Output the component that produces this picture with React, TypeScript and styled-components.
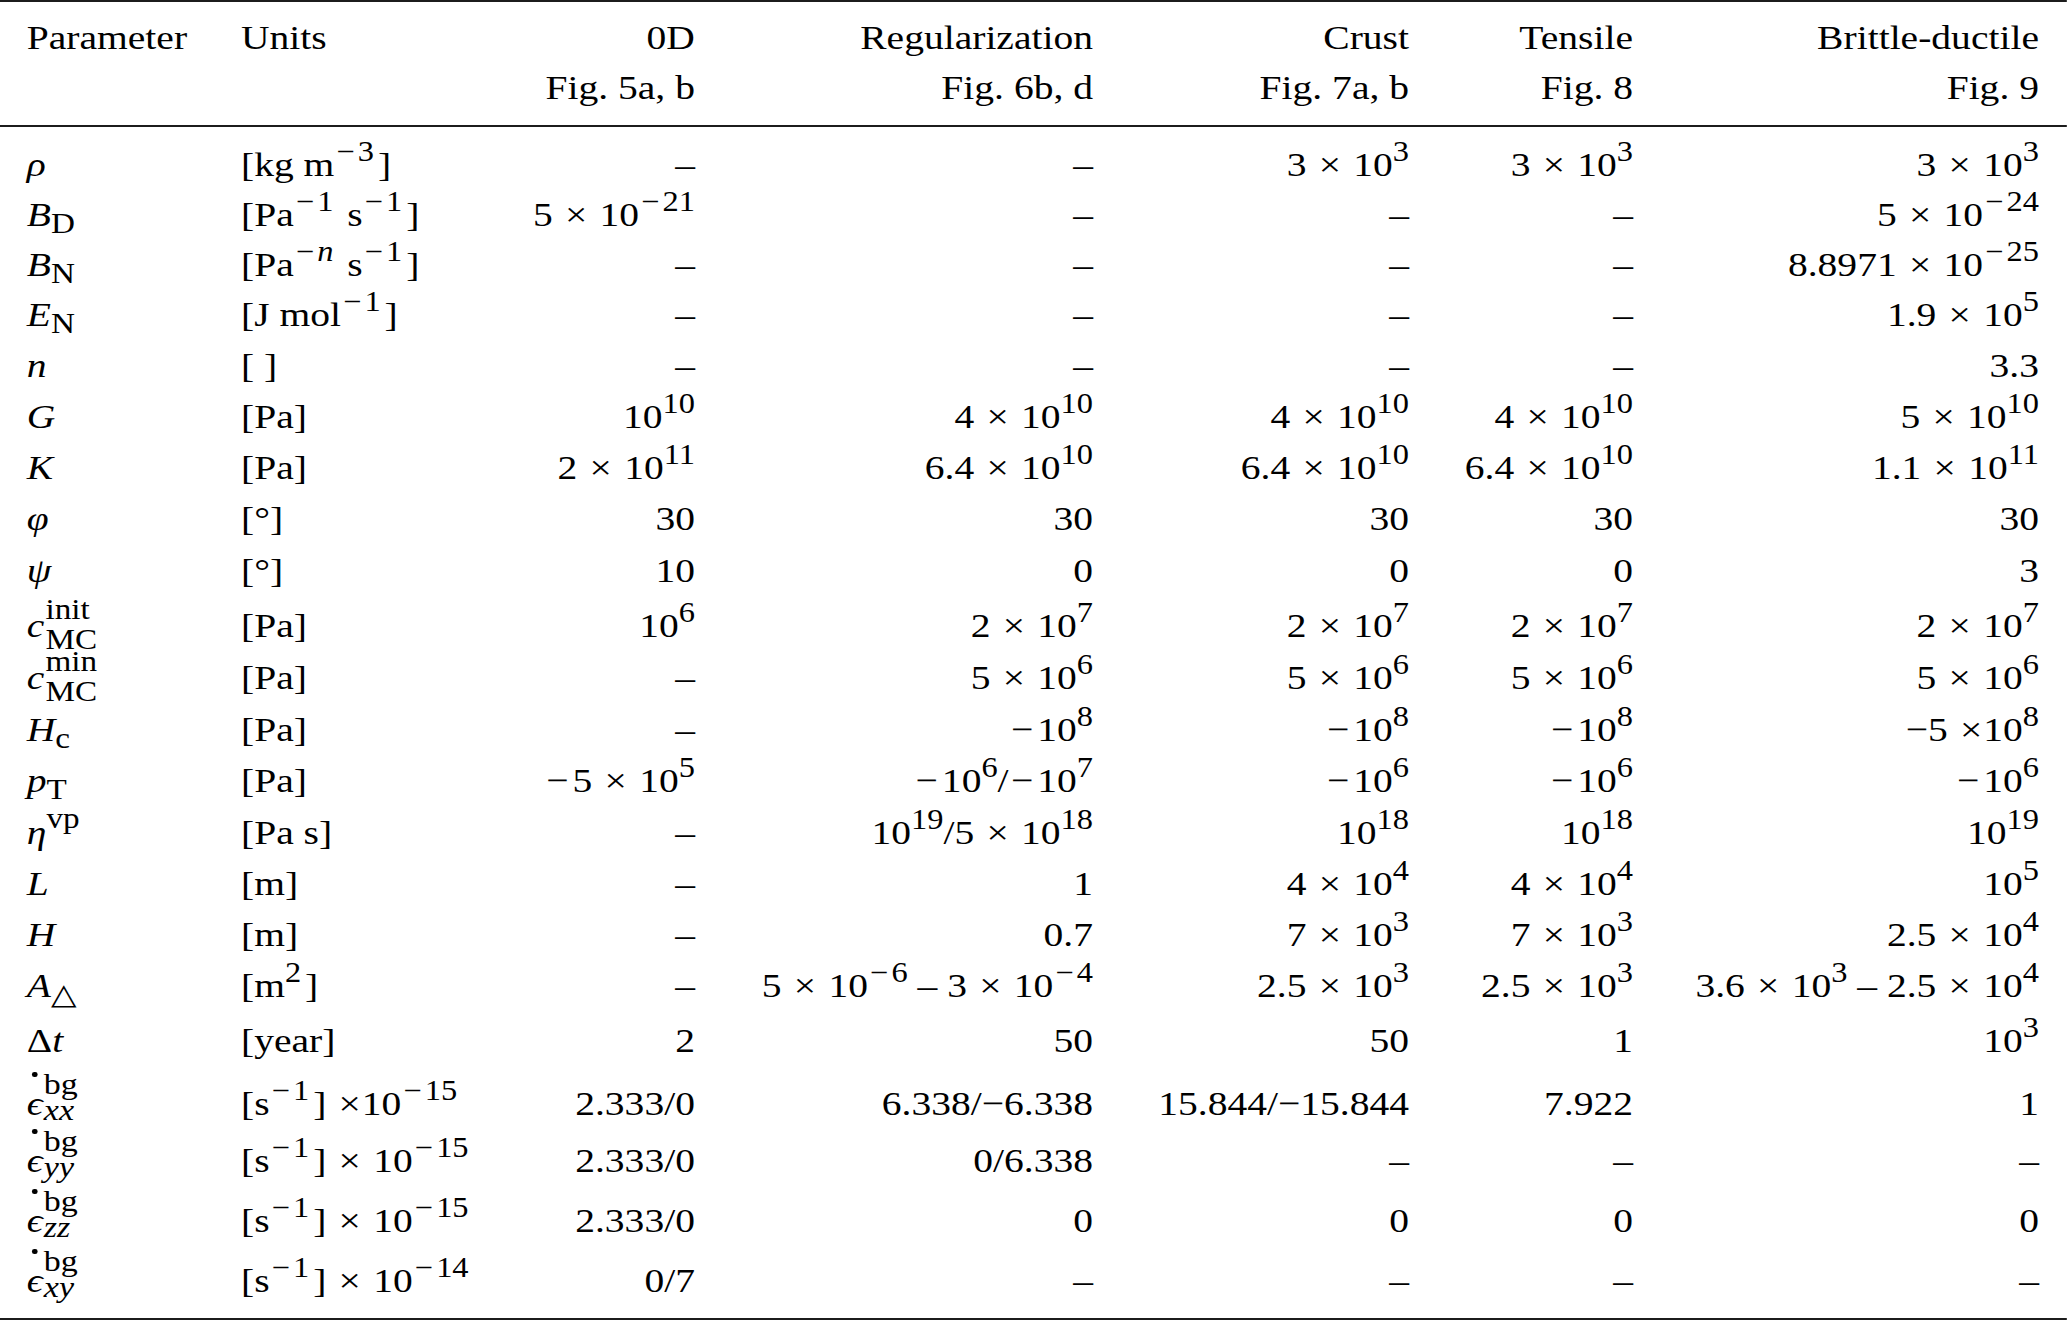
import React from 'react';
import styled, { createGlobalStyle } from 'styled-components';

const STRETCH = 1.14;
const PAGE_W = 2067;
const COLS = '187.9px 230px 168.2px 349.2px 277.2px 196.5px 356.1px';

const GlobalStyle = createGlobalStyle`
  html, body {
    margin: 0;
    padding: 0;
    background: #ffffff;
    overflow: hidden;
  }
  body {
    font-family: "Liberation Serif", "Times New Roman", "DejaVu Serif", serif;
    color: #000000;
  }
`;

const Page = styled.main`
  width: ${PAGE_W}px;
  height: 1321px;
  background: #ffffff;
`;

const Table = styled.section`
  width: ${PAGE_W / STRETCH}px;
  transform: scaleX(${STRETCH});
  transform-origin: 0 0;
  font-size: 34.7px;
  line-height: 50px;
  border-top: 2px solid #1c1c1c;
  border-bottom: 2px solid #1c1c1c;
`;

const Head = styled.header`
  display: grid;
  grid-template-columns: ${COLS};
  padding: 11.3px 24.6px 12.2px 23.5px;
  border-bottom: 2px solid #1c1c1c;
`;

const HeadCell = styled.div<{ $right?: boolean }>`
  text-align: ${(p) => (p.$right ? 'right' : 'left')};
  white-space: nowrap;
`;

const Body = styled.div`
  padding-top: 12.8px;
`;

const Row = styled.div<{ $h: number }>`
  display: grid;
  grid-template-columns: ${COLS};
  height: ${(p) => p.$h}px;
  padding: 0 24.6px 0 23.5px;
`;

const Cell = styled.div<{ $right?: boolean }>`
  text-align: ${(p) => (p.$right ? 'right' : 'left')};
  white-space: nowrap;
`;

const V = styled.i`
  font-style: italic;
`;

/* superscript on numbers and units */
const Sup = styled.sup<{ $space?: boolean }>`
  font-size: 0.82em;
  line-height: 0;
  vertical-align: 15px;
  padding-right: ${(p) => (p.$space ? '0.12em' : '0')};
`;

/* math operators: multiplication sign and minus with TeX-like side bearings */
const Op = styled.span<{ $tight?: boolean }>`
  padding: 0 ${(p) => (p.$tight ? '0.02em' : '0.06em')} 0 0.06em;
`;

const Minus = styled.span`
  padding: 0 0.1em 0 0.06em;
`;

const PSub = styled.sub`
  font-size: 0.84em;
  line-height: 0;
  vertical-align: -7px;
  font-style: normal;
`;

const PSup = styled.sup`
  font-size: 0.84em;
  line-height: 0;
  vertical-align: 16px;
`;

const Stack = styled.span<{ $drop: number; $gap: number; $size: number }>`
  display: inline-block;
  vertical-align: -${(p) => p.$drop}px;
  font-size: ${(p) => p.$size}em;
  line-height: ${(p) => p.$gap}px;
  margin: -40px 0 -40px 1px;
`;

const StackLine = styled.span<{ $italic?: boolean }>`
  display: block;
  font-style: ${(p) => (p.$italic ? 'italic' : 'normal')};
`;

const Eps = styled.i`
  position: relative;
  font-style: italic;
  &::after {
    content: '';
    position: absolute;
    left: 0.14em;
    top: -12px;
    width: 4.4px;
    height: 4.4px;
    border-radius: 50%;
    background: #000000;
  }
`;

const DASH = '–';

const M = () => <Minus>−</Minus>;
const X = ({ tight }: { tight?: boolean }) => (
  <Op $tight={tight}>{tight ? ' ×' : ' × '}</Op>
);

const pow = (exp: React.ReactNode) => (
  <>
    10<Sup>{exp}</Sup>
  </>
);

const sci = (mant: string | null, exp: React.ReactNode) =>
  mant ? (
    <>
      {mant}
      <X />
      {pow(exp)}
    </>
  ) : (
    pow(exp)
  );

const nexp = (d: string) => (
  <>
    <M />
    {d}
  </>
);

const neg = (exp: string) => (
  <>
    <M />
    {pow(exp)}
  </>
);

const eps = (sub: string) => (
  <>
    <Eps>ϵ</Eps>
    <Stack $drop={5} $gap={26} $size={0.86}>
      <StackLine>bg</StackLine>
      <StackLine $italic>{sub}</StackLine>
    </Stack>
  </>
);

const cMC = (sup: string) => (
  <>
    <V>c</V>
    <Stack $drop={12} $gap={30} $size={0.84}>
      <StackLine>{sup}</StackLine>
      <StackLine>MC</StackLine>
    </Stack>
  </>
);

type RowData = {
  h: number;
  param: React.ReactNode;
  unit: React.ReactNode;
  vals: React.ReactNode[];
};

const headers: { name: string; fig: string }[] = [
  { name: '0D', fig: 'Fig. 5a, b' },
  { name: 'Regularization', fig: 'Fig. 6b, d' },
  { name: 'Crust', fig: 'Fig. 7a, b' },
  { name: 'Tensile', fig: 'Fig. 8' },
  { name: 'Brittle-ductile', fig: 'Fig. 9' },
];

const rateUnit = (exp: string, tight?: boolean) => (
  <>
    [s<Sup $space>{nexp('1')}</Sup>]<X tight={tight} />
    {pow(nexp(exp))}
  </>
);

const rows: RowData[] = [
  {
    h: 50,
    param: <V>ρ</V>,
    unit: (
      <>
        [kg m<Sup $space>{nexp('3')}</Sup>]
      </>
    ),
    vals: [DASH, DASH, sci('3', '3'), sci('3', '3'), sci('3', '3')],
  },
  {
    h: 50,
    param: (
      <>
        <V>B</V>
        <PSub>D</PSub>
      </>
    ),
    unit: (
      <>
        [Pa<Sup $space>{nexp('1')}</Sup> s<Sup $space>{nexp('1')}</Sup>]
      </>
    ),
    vals: [sci('5', nexp('21')), DASH, DASH, DASH, sci('5', nexp('24'))],
  },
  {
    h: 50,
    param: (
      <>
        <V>B</V>
        <PSub>N</PSub>
      </>
    ),
    unit: (
      <>
        [Pa
        <Sup $space>
          <M />
          <V>n</V>
        </Sup>{' '}
        s<Sup $space>{nexp('1')}</Sup>]
      </>
    ),
    vals: [DASH, DASH, DASH, DASH, sci('8.8971', nexp('25'))],
  },
  {
    h: 51,
    param: (
      <>
        <V>E</V>
        <PSub>N</PSub>
      </>
    ),
    unit: (
      <>
        [J mol<Sup $space>{nexp('1')}</Sup>]
      </>
    ),
    vals: [DASH, DASH, DASH, DASH, sci('1.9', '5')],
  },
  {
    h: 51,
    param: <V>n</V>,
    unit: <>[ ]</>,
    vals: [DASH, DASH, DASH, DASH, '3.3'],
  },
  {
    h: 51,
    param: <V>G</V>,
    unit: <>[Pa]</>,
    vals: [sci(null, '10'), sci('4', '10'), sci('4', '10'), sci('4', '10'), sci('5', '10')],
  },
  {
    h: 51,
    param: <V>K</V>,
    unit: <>[Pa]</>,
    vals: [sci('2', '11'), sci('6.4', '10'), sci('6.4', '10'), sci('6.4', '10'), sci('1.1', '11')],
  },
  {
    h: 52,
    param: <V>φ</V>,
    unit: <>[°]</>,
    vals: ['30', '30', '30', '30', '30'],
  },
  {
    h: 55,
    param: <V>ψ</V>,
    unit: <>[°]</>,
    vals: ['10', '0', '0', '0', '3'],
  },
  {
    h: 52,
    param: cMC('init'),
    unit: <>[Pa]</>,
    vals: [sci(null, '6'), sci('2', '7'), sci('2', '7'), sci('2', '7'), sci('2', '7')],
  },
  {
    h: 52,
    param: cMC('min'),
    unit: <>[Pa]</>,
    vals: [DASH, sci('5', '6'), sci('5', '6'), sci('5', '6'), sci('5', '6')],
  },
  {
    h: 51,
    param: (
      <>
        <V>H</V>
        <PSub>c</PSub>
      </>
    ),
    unit: <>[Pa]</>,
    vals: [
      DASH,
      neg('8'),
      neg('8'),
      neg('8'),
      <>
        −5<X tight />
        {pow('8')}
      </>,
    ],
  },
  {
    h: 52,
    param: (
      <>
        <V>p</V>
        <PSub>T</PSub>
      </>
    ),
    unit: <>[Pa]</>,
    vals: [
      <>
        <M />
        {sci('5', '5')}
      </>,
      <>
        {neg('6')}/{neg('7')}
      </>,
      neg('6'),
      neg('6'),
      neg('6'),
    ],
  },
  {
    h: 51,
    param: (
      <>
        <V>η</V>
        <PSup>vp</PSup>
      </>
    ),
    unit: <>[Pa s]</>,
    vals: [
      DASH,
      <>
        {pow('19')}/{sci('5', '18')}
      </>,
      pow('18'),
      pow('18'),
      pow('19'),
    ],
  },
  {
    h: 51,
    param: <V>L</V>,
    unit: <>[m]</>,
    vals: [DASH, '1', sci('4', '4'), sci('4', '4'), pow('5')],
  },
  {
    h: 51,
    param: <V>H</V>,
    unit: <>[m]</>,
    vals: [DASH, '0.7', sci('7', '3'), sci('7', '3'), sci('2.5', '4')],
  },
  {
    h: 55,
    param: (
      <>
        <V>A</V>
        <PSub>△</PSub>
      </>
    ),
    unit: (
      <>
        [m<Sup $space>2</Sup>]
      </>
    ),
    vals: [
      DASH,
      <>
        {sci('5', nexp('6'))} – {sci('3', nexp('4'))}
      </>,
      sci('2.5', '3'),
      sci('2.5', '3'),
      <>
        {sci('3.6', '3')} – {sci('2.5', '4')}
      </>,
    ],
  },
  {
    h: 63,
    param: (
      <>
        Δ<V>t</V>
      </>
    ),
    unit: <>[year]</>,
    vals: ['2', '50', '50', '1', pow('3')],
  },
  {
    h: 57,
    param: eps('xx'),
    unit: rateUnit('15', true),
    vals: ['2.333/0', '6.338/−6.338', '15.844/−15.844', '7.922', '1'],
  },
  {
    h: 60,
    param: eps('yy'),
    unit: rateUnit('15'),
    vals: ['2.333/0', '0/6.338', DASH, DASH, DASH],
  },
  {
    h: 60,
    param: eps('zz'),
    unit: rateUnit('15'),
    vals: ['2.333/0', '0', '0', '0', '0'],
  },
  {
    h: 62,
    param: eps('xy'),
    unit: rateUnit('14'),
    vals: ['0/7', DASH, DASH, DASH, DASH],
  },
];

export default function App() {
  return (
    <>
      <GlobalStyle />
      <Page>
        <Table>
          <Head>
            <HeadCell>Parameter</HeadCell>
            <HeadCell>Units</HeadCell>
            {headers.map((h) => (
              <HeadCell key={h.name} $right>
                {h.name}
                <br />
                {h.fig}
              </HeadCell>
            ))}
          </Head>
          <Body>
            {rows.map((r, i) => (
              <Row key={i} $h={r.h}>
                <Cell>{r.param}</Cell>
                <Cell>{r.unit}</Cell>
                {r.vals.map((v, j) => (
                  <Cell key={j} $right>
                    {v}
                  </Cell>
                ))}
              </Row>
            ))}
          </Body>
        </Table>
      </Page>
    </>
  );
}
